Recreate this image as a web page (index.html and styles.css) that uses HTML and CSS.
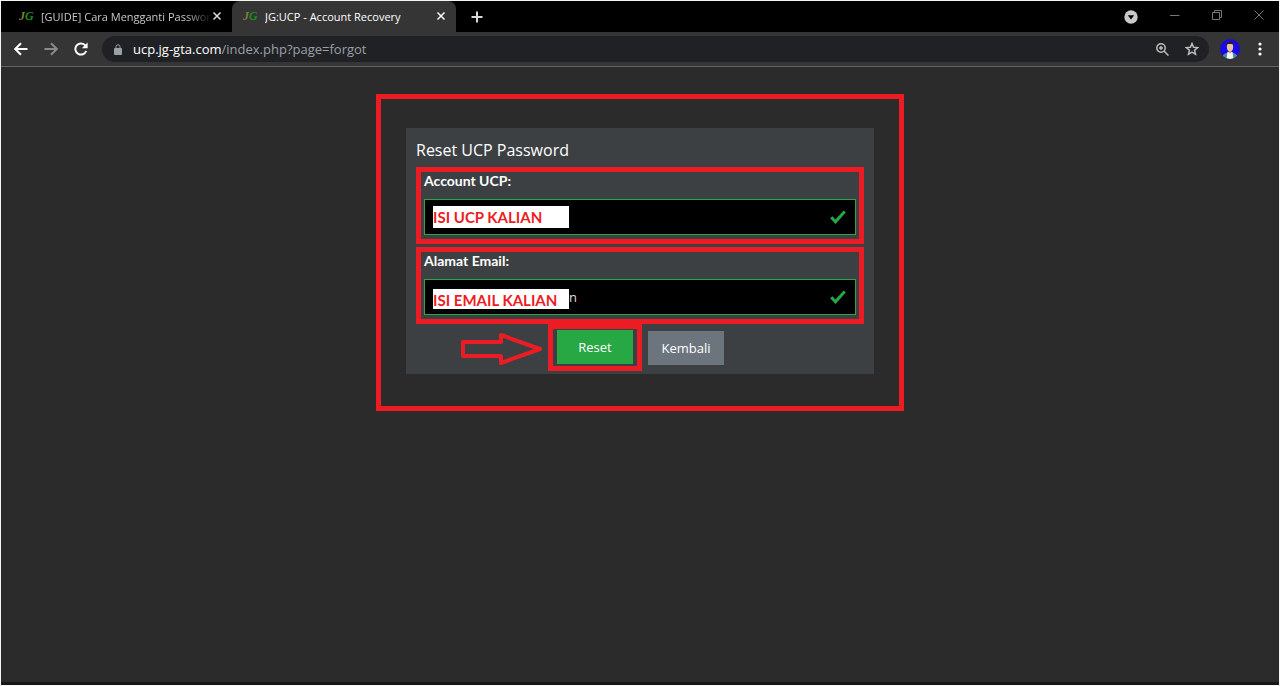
FILE: index.html
```html
<!DOCTYPE html>
<html lang="id">
  <head>
    <meta charset="utf-8" />
    <title>JG:UCP - Account Recovery</title>
    <link rel="stylesheet" href="styles.css">
  </head>
  <body>
    <header class="browser">
      <div class="tabs">
        <div class="tab">
          <span class="favicon"><i>J</i><b>G</b></span>
          <span class="tab-title fade">[GUIDE] Cara Mengganti Passwor</span>
          <button class="icon" aria-label="Close tab">
            <svg width="10" height="10" viewBox="0 0 10 10"><path d="M1.5 1.5l7 7M8.5 1.5l-7 7" /></svg>
          </button>
        </div>
        <div class="tab active">
          <span class="favicon"><i>J</i><b>G</b></span>
          <span class="tab-title">JG:UCP - Account Recovery</span>
          <button class="icon" aria-label="Close tab">
            <svg width="10" height="10" viewBox="0 0 10 10"><path d="M1.5 1.5l7 7M8.5 1.5l-7 7" /></svg>
          </button>
        </div>
        <button class="icon new-tab" aria-label="New tab">
          <svg width="12" height="12" viewBox="0 0 12 12"><path d="M6 0.5v11M0.5 6h11" /></svg>
        </button>
        <div class="window-buttons">
          <button class="icon" aria-label="Search tabs">
            <svg width="14" height="14" viewBox="0 0 14 14"><circle class="disc" cx="7" cy="7" r="6.7" /><path class="caret" d="M3.8 5.2h6.4L7 9.4z" /></svg>
          </button>
          <button class="icon thin" aria-label="Minimize">
            <svg width="10" height="10" viewBox="0 0 10 10"><path d="M0 5.5h9.5" /></svg>
          </button>
          <button class="icon thin" aria-label="Restore">
            <svg width="10" height="10" viewBox="0 0 10 10"><path d="M0.5 2.5h7v7h-7zM2.5 2.5v-2h7v7h-2" /></svg>
          </button>
          <button class="icon thin" aria-label="Close">
            <svg width="10" height="10" viewBox="0 0 10 10"><path d="M0.5 0.5l9 9M9.5 0.5l-9 9" /></svg>
          </button>
        </div>
      </div>
      <div class="toolbar">
        <button class="icon" aria-label="Back">
          <svg width="14" height="14" viewBox="0 0 14 14"><path d="M13.5 7H1.5M7 1.2L1.2 7 7 12.8" /></svg>
        </button>
        <button class="icon dim" aria-label="Forward">
          <svg width="14" height="14" viewBox="0 0 14 14"><path d="M0.5 7h12M7 1.2L12.8 7 7 12.8" /></svg>
        </button>
        <button class="icon reload" aria-label="Reload">
          <svg width="14" height="14" viewBox="0 0 14 14"><path d="M12.2 9A5.6 5.6 0 1 1 11 3.1L12.5 4.6" /><path class="solid" d="M13.6 0.4v5.8H7.8z" /></svg>
        </button>
        <div class="address">
          <svg class="lock" width="8" height="11" viewBox="0 0 8 11"><rect class="body" y="4" width="8" height="7" rx="1" /><path d="M2 4V2.8a2 2 0 0 1 4 0V4" /></svg>
          <span class="url"><strong>ucp.jg-gta.com</strong>/index.php?page=forgot</span>
          <button class="icon grey" aria-label="Zoom">
            <svg width="13" height="13" viewBox="0 0 13 13"><circle cx="5" cy="5" r="4.2" /><path d="M8.2 8.2l4.3 4.3M5 3v4M3 5h4" /></svg>
          </button>
          <button class="icon grey" aria-label="Bookmark">
            <svg width="14" height="14" viewBox="0 0 14 14"><path d="M7 1.500l1.600 3.700 4.100.4-3.100 2.700.9 4L7 10.200l-3.500 2.100.9-4L1.300 5.600l4.100-.4z" /></svg>
          </button>
        </div>
        <button class="icon avatar" aria-label="Profile">
          <svg width="20" height="20" viewBox="0 0 20 20">
            <defs><clipPath id="round"><circle cx="10" cy="10" r="10" /></clipPath></defs>
            <g clip-path="url(#round)">
              <rect width="20" height="20" fill="#1a08e8" />
              <path d="M2 20c0-4 2-5.500 5.500-6.500h5C16 14.500 18 16 18 20z" fill="#4d8c99" />
              <path d="M7.500 13h5l1 7h-7z" fill="#f4f4f4" />
              <path d="M8.500 11h3v2.500l-1.500 1-1.500-1z" fill="#cf9c84" />
              <ellipse cx="10" cy="7.800" rx="3.200" ry="4.500" fill="#e8bda8" />
              <path d="M6.600 7.500C6 3.500 7.500 2.500 10 2.500s4 1 3.400 5L12.500 5h-5z" fill="#2b211f" />
            </g>
          </svg>
        </button>
        <button class="icon" aria-label="Menu">
          <svg width="4" height="14" viewBox="0 0 4 14"><circle class="solid" cx="2" cy="2" r="1.600" /><circle class="solid" cx="2" cy="7" r="1.600" /><circle class="solid" cx="2" cy="12" r="1.600" /></svg>
        </button>
      </div>
    </header>

    <main>
      <div class="frame">
        <form class="card">
          <h1>Reset UCP Password</h1>
          <div class="group">
            <label for="ucp">Account UCP:</label>
            <div class="field">
              <input type="text" id="ucp" />
              <span class="note">ISI UCP KALIAN</span>
              <svg class="check" width="16" height="14" viewBox="0 0 16 14"><path d="M1.300 7.200L5.500 11.800 14.700 1.500" /></svg>
            </div>
          </div>
          <div class="group">
            <label for="email">Alamat Email:</label>
            <div class="field">
              <input type="text" id="email" value="n" />
              <span class="note low">ISI EMAIL KALIAN</span>
              <svg class="check" width="16" height="14" viewBox="0 0 16 14"><path d="M1.300 7.200L5.500 11.800 14.700 1.500" /></svg>
            </div>
          </div>
          <div class="actions">
            <svg class="arrow" width="82" height="34" viewBox="0 0 82 34"><path d="M3 11H41V4L80 18 41 32V25H3z" /></svg>
            <div class="mark">
              <button type="button" class="btn green">Reset</button>
            </div>
            <button type="button" class="btn">Kembali</button>
          </div>
        </form>
      </div>
    </main>
    <div class="bottom-edge"></div>
  </body>
</html>
```
FILE: styles.css
```css
* {
  box-sizing: border-box;
}

body {
  margin: 0;
  min-height: 100vh;
  display: flex;
  flex-direction: column;
  border: 1px solid #f5f5f5;
  background-color: #2b2b2b;
  color: white;
  font-family: "Open Sans", "Noto Sans", sans-serif;
}

button,
input {
  font-family: inherit;
}

svg {
  display: block;
  fill: none;
  stroke: currentColor;
}

.icon {
  display: flex;
  padding: 0;
  border: none;
  background: none;
  color: white;
  stroke-width: 2;
  cursor: pointer;
}

.solid {
  fill: currentColor;
  stroke: none;
}

/* browser bar */
.tabs {
  display: flex;
  align-items: center;
  height: 31px;
  background-color: black;
}

.tab {
  display: flex;
  align-items: center;
  width: 231px;
  height: 31px;
  padding: 0 10px 1px 18px;
  font-size: 11px;
  color: #c8c8c8;
}

.tab .icon {
  color: #dcdcdc;
  stroke-width: 1.5;
}

.tab.active {
  width: 224px;
  padding-left: 11px;
  border-radius: 8px 8px 0 0;
  background-color: #353535;
  color: white;
}

.tab.active .icon {
  color: white;
}

.favicon {
  width: 16px;
  margin-right: 6px;
  font: italic bold 12px "Liberation Serif", serif;
  color: #1f8a1f;
}

.favicon i {
  color: #7d8035;
}

.tab-title {
  flex: 1;
  overflow: hidden;
  white-space: nowrap;
}

.fade {
  mask-image: linear-gradient(to right, black 85%, transparent);
}

.new-tab {
  margin-left: 15px;
  color: #d8d8d8;
}

.window-buttons {
  display: flex;
  align-items: center;
  gap: 32px;
  margin-left: auto;
  padding-right: 15px;
}

.thin {
  padding-bottom: 4px;
  color: #777;
  stroke-width: 1;
}

.disc {
  fill: #c9c9c9;
  stroke: none;
}

.caret {
  fill: black;
  stroke: none;
}

.toolbar {
  display: flex;
  align-items: center;
  gap: 16px;
  height: 35px;
  padding: 0 17px 0 13px;
  border-bottom: 1px solid #636363;
  background-color: #353535;
}

.dim {
  color: #8a8a8a;
}

.address {
  flex: 1;
  display: flex;
  align-items: center;
  gap: 16px;
  height: 26px;
  margin: 0 -5px 0 -2px;
  padding: 0 10px 0 12px;
  border-radius: 13px;
  background-color: #202124;
}

.avatar {
  margin-right: 2px;
}

.avatar svg {
  stroke: none;
}

.lock {
  color: #9aa0a6;
}

.lock .body {
  fill: currentColor;
  stroke: none;
}

.url {
  flex: 1;
  margin-left: -5px;
  font-size: 13px;
  color: #9aa0a6;
}

.url strong {
  font-weight: 500;
  color: white;
}

.grey {
  color: #bdbdbd;
  stroke-width: 1.5;
}

/* page */
main {
  flex: 1;
  padding: 27px 0;
}

.frame {
  width: 100%;
  max-width: 528px;
  margin: 0 auto;
  padding: 29px 25px 32px;
  border: 5px solid #ed1c24;
}

.card {
  padding: 10px 10px 3px;
  background-color: #3c4043;
}

h1 {
  margin: 0 0 5px;
  font-size: 16px;
  font-weight: 400;
  line-height: 24px;
}

.group {
  margin-bottom: 3px;
  padding: 0 3px 4px;
  border: 5px solid #ed1c24;
}

label {
  display: block;
  margin-bottom: 9px;
  font-family: Lato, sans-serif;
  font-size: 14px;
  font-weight: 700;
  line-height: 18px;
}

.field {
  position: relative;
}

.field input {
  display: block;
  width: 100%;
  height: 36px;
  padding: 0 40px 0 144px;
  border: 1px solid #28a745;
  background-color: black;
  color: #ddd;
  font-size: 13px;
}

.note {
  position: absolute;
  top: 7px;
  left: 9px;
  width: 136px;
  height: 22px;
  background-color: white;
  color: #ed1c24;
  font-family: Lato, sans-serif;
  font-size: 15px;
  font-weight: 700;
  line-height: 22px;
  white-space: nowrap;
}

.note.low {
  top: 10px;
  height: 20px;
}

.check {
  position: absolute;
  top: 11px;
  right: 10px;
  color: #28a745;
  stroke-width: 3;
}

.actions {
  display: flex;
  align-items: center;
  gap: 6px;
  margin-top: -3px;
  padding-left: 44px;
}

.arrow {
  color: #ed1c24;
  stroke-width: 4;
  stroke-linejoin: round;
}

.mark {
  padding: 1px 4px 2px;
  border: 5px solid #ed1c24;
}

.btn {
  display: block;
  width: 76px;
  height: 34px;
  padding: 0;
  border: 1px solid #6c757d;
  background-color: #6c757d;
  color: white;
  font-size: 13px;
  cursor: pointer;
}

.green {
  border-color: #28a745;
  background-color: #28a745;
}

.bottom-edge {
  height: 3px;
  background-color: #171717;
}
```
